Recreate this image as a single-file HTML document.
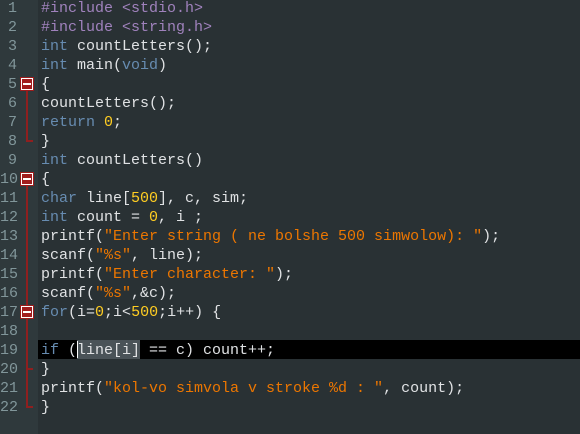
<!DOCTYPE html><html><head><style>
body{margin:0;width:580px;height:434px;background:#293134;overflow:hidden;position:relative;font-family:"Liberation Mono",monospace;font-size:15px}
#g{position:absolute;left:0;top:0;width:38px;height:434px;background:#2f393c}
.ln{position:absolute;left:0;width:17px;text-align:right;color:#81969a;line-height:19px;height:19px}
.c{position:absolute;left:41px;line-height:19px;height:19px;color:#e0e2e4;white-space:pre}
.k{color:#678cb1}.s{color:#ec7600}.n{color:#ffcd22}.p{color:#a082bd}
.box{position:absolute;left:20px;width:12px;height:12px;border:1px solid #9b1c1c;background:#fff;box-sizing:content-box}
.box:after{content:"";position:absolute;left:1px;top:1px;width:10px;height:10px;background:#a11d1d}
.box:before{content:"";position:absolute;left:2px;top:5px;width:8px;height:2px;background:#fff;z-index:2}
.vl{position:absolute;left:26px;width:2px;background:#8f1f1f}
.tk{position:absolute;left:26px;width:7px;height:2px;background:#8f1f1f}
</style></head><body>
<div id="g"></div>
<div style="position:absolute;left:38px;top:340px;width:542px;height:19px;background:#000"></div>
<div style="position:absolute;left:77px;top:340px;width:63px;height:19px;background:#4a5358"></div>
<div style="position:absolute;left:77px;top:341px;width:1px;height:17px;background:#fff"></div>
<div class="vl" style="top:91px;height:51px"></div><div class="tk" style="top:140px"></div>
<div class="vl" style="top:186px;height:222px"></div><div class="tk" style="top:406px"></div>
<div class="tk" style="top:368px"></div>
<div class="box" style="top:77px"></div>
<div class="box" style="top:172px"></div>
<div class="box" style="top:305px"></div>
<div class="ln" style="top:-1px">1</div><div class="ln" style="top:18px">2</div><div class="ln" style="top:37px">3</div><div class="ln" style="top:56px">4</div><div class="ln" style="top:75px">5</div><div class="ln" style="top:94px">6</div><div class="ln" style="top:113px">7</div><div class="ln" style="top:132px">8</div><div class="ln" style="top:151px">9</div><div class="ln" style="top:170px">10</div><div class="ln" style="top:189px">11</div><div class="ln" style="top:208px">12</div><div class="ln" style="top:227px">13</div><div class="ln" style="top:246px">14</div><div class="ln" style="top:265px">15</div><div class="ln" style="top:284px">16</div><div class="ln" style="top:303px">17</div><div class="ln" style="top:322px">18</div><div class="ln" style="top:341px">19</div><div class="ln" style="top:360px">20</div><div class="ln" style="top:379px">21</div><div class="ln" style="top:398px">22</div>
<div class="c p" style="top:-1px">#include &lt;stdio.h&gt;</div>
<div class="c p" style="top:18px">#include &lt;string.h&gt;</div>
<div class="c" style="top:37px"><span class="k">int</span> countLetters();</div>
<div class="c" style="top:56px"><span class="k">int</span> main(<span class="k">void</span>)</div>
<div class="c" style="top:75px">{</div>
<div class="c" style="top:94px">countLetters();</div>
<div class="c" style="top:113px"><span class="k">return</span> <span class="n">0</span>;</div>
<div class="c" style="top:132px">}</div>
<div class="c" style="top:151px"><span class="k">int</span> countLetters()</div>
<div class="c" style="top:170px">{</div>
<div class="c" style="top:189px"><span class="k">char</span> line[<span class="n">500</span>], c, sim;</div>
<div class="c" style="top:208px"><span class="k">int</span> count = <span class="n">0</span>, i ;</div>
<div class="c" style="top:227px">printf(<span class="s">"Enter string ( ne bolshe 500 simwolow): "</span>);</div>
<div class="c" style="top:246px">scanf(<span class="s">"%s"</span>, line);</div>
<div class="c" style="top:265px">printf(<span class="s">"Enter character: "</span>);</div>
<div class="c" style="top:284px">scanf(<span class="s">"%s"</span>,&amp;c);</div>
<div class="c" style="top:303px"><span class="k">for</span>(i=<span class="n">0</span>;i&lt;<span class="n">500</span>;i++) {</div>
<div class="c" style="top:341px"><span class="k">if</span> (line[i] == c) count++;</div>
<div class="c" style="top:360px">}</div>
<div class="c" style="top:379px">printf(<span class="s">"kol-vo simvola v stroke %d : "</span>, count);</div>
<div class="c" style="top:398px">}</div>
</body></html>
